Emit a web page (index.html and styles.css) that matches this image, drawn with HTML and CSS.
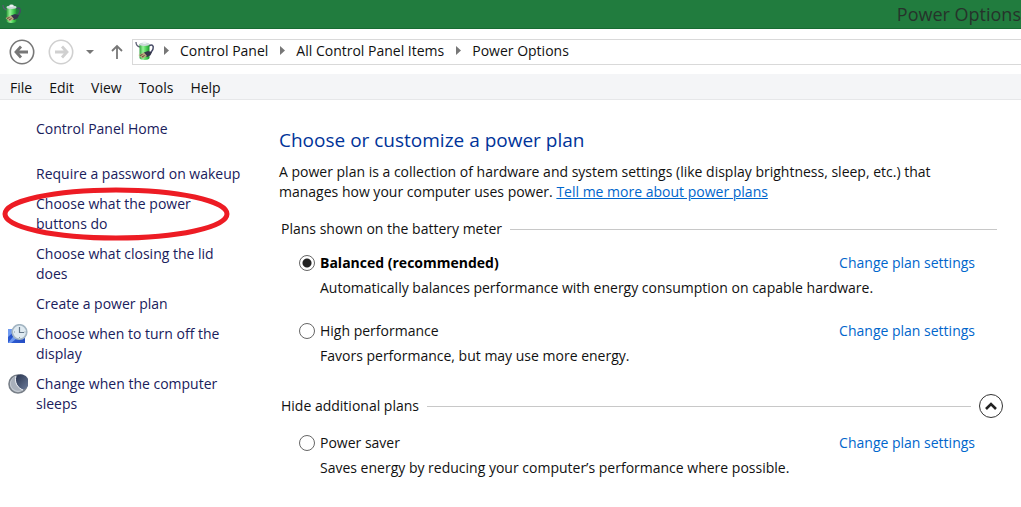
FILE: index.html
```html
<!DOCTYPE html>
<html lang="en">
<head>
<meta charset="utf-8">
<title>Power Options</title>
<link rel="stylesheet" href="styles.css">
</head>
<body>
<svg class="defs" aria-hidden="true">
  <defs>
    <linearGradient id="cell" x1="0" x2="1">
      <stop offset="0" stop-color="#2fa53c"/><stop offset=".35" stop-color="#98f298"/><stop offset=".65" stop-color="#4fd45a"/><stop offset="1" stop-color="#1d932e"/>
    </linearGradient>
    <linearGradient id="screen" x1="0" y1="1" x2="1" y2="0">
      <stop offset="0" stop-color="#2f5fd6"/><stop offset="1" stop-color="#1c3fb4"/>
    </linearGradient>
    <linearGradient id="night" x1="0" x2="1" y2="1">
      <stop offset="0" stop-color="#27324c"/><stop offset="1" stop-color="#6f7f9e"/>
    </linearGradient>
    <symbol id="battery" viewBox="0 0 20 20">
      <path d="M1 1c0 3 1 4.500 4 5" fill="none" stroke="#5a5d72" stroke-width="1.300"/>
      <path d="M14 5c3-2 5-.5 4 3-.5 2-2 3-3 4.500" fill="none" stroke="#464a66" stroke-width="1.500"/>
      <path d="M4.500 3v14c0 2.600 10 2.600 10 0V3z" fill="url(#cell)"/>
      <ellipse cx="9.500" cy="3.200" rx="5" ry="1.700" fill="#cdd8da"/>
      <ellipse cx="9.500" cy="1.700" rx="2.200" ry="1.200" fill="#eef3f4"/>
      <path d="M9 11.500l4-1.500 4 1.200-1.500 3L12 16l-3.500-2z" fill="#34364a"/>
      <path d="M3.500 14l5.500-2.500 3 3.500-4.500 2.500z" fill="#b8a67e"/>
      <path d="M5 14.500l2.500-1M7 16l2.500-1.500" stroke="#5f4d35"/>
    </symbol>
  </defs>
</svg>

<header class="titlebar">
  <svg class="icon"><use href="#battery"/></svg>
  <h1 class="window-title">Power Options</h1>
</header>

<div class="navbar">
  <button class="nav-button back" aria-label="Back">
    <svg width="26" height="26" viewBox="0 0 26 26" fill="none" stroke="currentColor"><circle cx="13" cy="13" r="11.700" stroke-width="1.600"/><path d="M7.500 13H19M12 7.500L7 13l5 5.500" stroke-width="2.800"/></svg>
  </button>
  <button class="nav-button forward" aria-label="Forward">
    <svg width="26" height="26" viewBox="0 0 26 26" fill="none" stroke="currentColor"><circle cx="13" cy="13" r="11.700" stroke-width="1.600"/><path d="M18.500 13H7M14 7.500l5 5.500-5 5.500" stroke-width="2.800"/></svg>
  </button>
  <button class="nav-button recent" aria-label="Recent locations">
    <svg width="8" height="4" viewBox="0 0 8 4"><path d="M0 0h8L4 4z" fill="currentColor"/></svg>
  </button>
  <button class="nav-button up" aria-label="Up">
    <svg width="12" height="15" viewBox="0 0 12 15" fill="none" stroke="currentColor" stroke-width="1.800"><path d="M6 15V2M1 7l5-5 5 5"/></svg>
  </button>
  <nav class="address" aria-label="Address">
    <svg class="icon"><use href="#battery"/></svg>
    <svg class="sep" viewBox="0 0 5 9"><path d="M0 0l5 4.500L0 9z"/></svg>
    <a href="#">Control Panel</a>
    <svg class="sep" viewBox="0 0 5 9"><path d="M0 0l5 4.500L0 9z"/></svg>
    <a href="#">All Control Panel Items</a>
    <svg class="sep" viewBox="0 0 5 9"><path d="M0 0l5 4.500L0 9z"/></svg>
    <a href="#">Power Options</a>
  </nav>
</div>

<div class="menubar">
  <button>File</button><button>Edit</button><button>View</button><button>Tools</button><button>Help</button>
</div>

<div class="content">
  <nav class="sidebar" aria-label="Tasks">
    <a class="home" href="#">Control Panel Home</a>
    <a href="#">Require a password on wakeup</a>
    <a class="marked" href="#">Choose what the power buttons do
      <svg class="ring" width="228" height="56" viewBox="0 0 228 56" aria-hidden="true"><ellipse cx="114" cy="28" rx="111" ry="24" fill="none" stroke="#ed1c24" stroke-width="5"/></svg>
    </a>
    <a href="#">Choose what closing the lid does</a>
    <a href="#">Create a power plan</a>
    <div class="task">
      <svg width="20" height="20" viewBox="0 0 20 20" aria-hidden="true"><path d="M0 5h17v14H0z" fill="url(#screen)"/><path d="M0 13L9 5H0zM0 19h3l10-8-4-3z" fill="#6f9af0"/><circle cx="11.500" cy="8" r="7.300" fill="#dfeaf1" stroke="#a3b5c2" stroke-width="1.600"/><path d="M11.500 3v5.500H16" fill="none" stroke="#66788a" stroke-width="1.200"/><path d="M6 8h1M11.500 13v1M16.500 8h1" stroke="#8799a6"/></svg>
      <a href="#">Choose when to turn off the display</a>
    </div>
    <div class="task">
      <svg width="20" height="20" viewBox="0 0 20 20" aria-hidden="true"><circle cx="10" cy="10" r="9" fill="#c3c9d1" stroke="#787f88" stroke-width="1.600"/><path d="M8 2a8 8 0 1 1 7 14C10 14 6 9 8 2z" fill="url(#night)"/><path d="M8 2c-2 7 2 12 7 14-5 2-11 0-12-5-.6-4 2-8 5-9z" fill="#a9b0bb"/><path d="M8 2c-2 7 2 12 7 14" fill="none" stroke="#edf0f5"/></svg>
      <a href="#">Change when the computer sleeps</a>
    </div>
  </nav>

  <main class="main">
    <h2>Choose or customize a power plan</h2>
    <p class="intro">A power plan is a collection of hardware and system settings (like display brightness, sleep, etc.) that manages how your computer uses power. <a href="#">Tell me more about power plans</a></p>

    <section>
      <div class="group"><h3>Plans shown on the battery meter</h3><span class="rule"></span></div>
      <div class="plan">
        <input type="radio" name="plan" id="balanced" checked>
        <label class="current" for="balanced">Balanced (recommended)</label>
        <a href="#">Change plan settings</a>
        <p>Automatically balances performance with energy consumption on capable hardware.</p>
      </div>
      <div class="plan">
        <input type="radio" name="plan" id="high">
        <label for="high">High performance</label>
        <a href="#">Change plan settings</a>
        <p>Favors performance, but may use more energy.</p>
      </div>
    </section>

    <section class="additional">
      <div class="group"><h3>Hide additional plans</h3><span class="rule"></span>
        <button class="collapse" aria-label="Hide additional plans"><svg width="12" height="9" viewBox="0 0 12 9"><path d="M1 7l5-5 5 5" fill="none" stroke="#222" stroke-width="2.600"/></svg></button>
      </div>
      <div class="plan">
        <input type="radio" name="plan" id="saver">
        <label for="saver">Power saver</label>
        <a href="#">Change plan settings</a>
        <p>Saves energy by reducing your computer’s performance where possible.</p>
      </div>
    </section>
  </main>
</div>
</body>
</html>
```
FILE: styles.css
```css
* { box-sizing: border-box; }
body {
  margin: 0;
  background: #fff;
  color: #111;
  font: 14px/20px "Open Sans", "Noto Sans", sans-serif;
  overflow-x: hidden;
}
h1, h2, h3, p { margin: 0; font-weight: 400; }
a { text-decoration: none; color: #0066cc; }
button { border: 0; padding: 0; background: none; font: inherit; color: inherit; }
.defs { position: absolute; width: 0; height: 0; }
.icon { width: 20px; height: 20px; flex: none; }

.titlebar {
  display: flex;
  align-items: center;
  justify-content: space-between;
  height: 29px;
  padding-left: 2px;
  background: #217c3e;
  border-bottom: 1px solid #176b32;
}
.window-title { font-size: 18px; line-height: 28px; color: #26332b; }

.navbar { display: flex; align-items: center; height: 45px; padding-left: 9px; }
.nav-button { display: flex; color: #777; }
.forward { margin-left: 13px; color: #d0d0d0; }
.recent { margin-left: 12px; }
.up { margin-left: 17px; }
.address {
  display: flex;
  align-items: center;
  flex: 1;
  height: 26px;
  margin-left: 9px;
  padding: 0 0 2px 2px;
  border: 1px solid #d9d9d9;
  border-right: 0;
}
.address a { color: #111; }
.sep { width: 5px; height: 9px; margin: 0 11px 0 12px; fill: #777; }
.address .icon + .sep { margin-left: 9px; }

.menubar {
  display: flex;
  gap: 17px;
  height: 26px;
  padding: 3px 10px 0;
  background: #f4f5f7;
  border-bottom: 1px solid #e6e7e9;
}

.content { display: flex; }
.sidebar {
  display: flex;
  flex-direction: column;
  gap: 10px;
  flex: none;
  width: 279px;
  padding: 19px 31px 0 36px;
}
.sidebar a { color: #19205c; }
.sidebar .home { margin-bottom: 15px; }
.sidebar > a, .task a { max-width: 208px; }
.marked { position: relative; }
.ring { position: absolute; left: -34px; top: -8px; pointer-events: none; }
.task { display: flex; gap: 8px; margin-left: -28px; }
.task svg { flex: none; }

.main { flex: 1; padding: 26px 24px 20px 0; }
h2 { font-size: 19px; line-height: 28px; color: #003399; }
.intro { max-width: 680px; margin-top: 8px; }
.intro a { text-decoration: underline; }
.group { display: flex; align-items: center; gap: 8px; height: 24px; padding-left: 2px; }
section { margin-top: 15px; }
.additional { margin-top: 28px; }
h3 { font-size: 14px; }
.rule { flex: 1; height: 1px; background: #c8c8c8; }
.plan {
  display: grid;
  grid-template-columns: 16px 1fr auto;
  column-gap: 5px;
  row-gap: 5px;
  align-items: center;
  padding: 0 22px 0 20px;
}
.group + .plan { margin-top: 12px; }
.additional .group + .plan { margin-top: 15px; }
.plan + .plan { margin-top: 23px; }
.plan p { grid-column: 2 / -1; }
.plan .current { font-weight: 700; color: #000; }
.plan input {
  appearance: none;
  width: 16px;
  height: 16px;
  margin: 0;
  border: 1px solid #666;
  border-radius: 50%;
  background: #fff;
}
.plan input:checked { background: radial-gradient(circle, #222 0 4px, #fff 5px); }
.collapse {
  display: flex;
  align-items: center;
  justify-content: center;
  width: 24px;
  height: 24px;
  margin-right: -6px;
  border: 1px solid #333;
  border-radius: 50%;
}
```
